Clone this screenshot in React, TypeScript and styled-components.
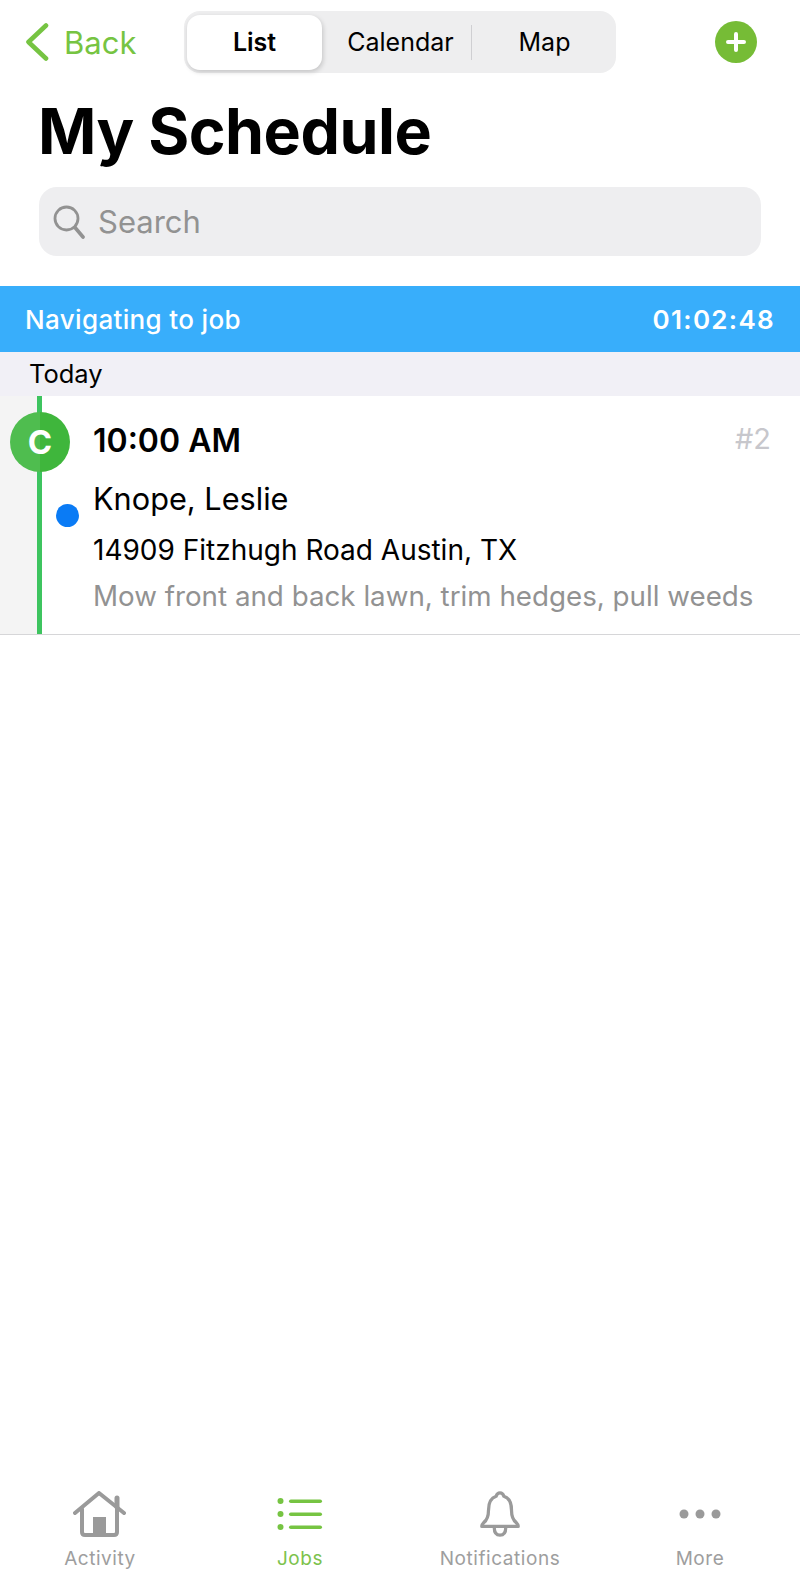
import React from 'react';
import styled, { createGlobalStyle } from 'styled-components';

const GlobalStyle = createGlobalStyle`
  html, body {
    margin: 0;
    padding: 0;
    background: #fff;
    font-family: Inter, "Liberation Sans", sans-serif;
  }
`;

const Page = styled.div`
  width: 800px;
  height: 1588px;
  display: flex;
  flex-direction: column;
  overflow: hidden;
  background: #fff;
  color: #000;
`;

const TopBar = styled.div`
  height: 62px;
  margin-top: 11px;
  padding: 0 43px 0 25px;
  display: flex;
  align-items: center;
`;

const BackLink = styled.div`
  width: 159px;
  display: flex;
  align-items: center;
  gap: 15px;
  color: #76c442;
  font-size: 31px;
`;

const Segments = styled.div`
  width: 432px;
  height: 62px;
  box-sizing: border-box;
  padding: 3px;
  border-radius: 16px;
  background: #eeeeef;
  display: grid;
  grid-template-columns: 135px 150px 1fr;
  align-items: center;
`;

const Segment = styled.div<{ $active?: boolean; $divider?: boolean; $inset?: number }>`
  height: 55px;
  box-sizing: border-box;
  padding-left: ${({ $inset }) => $inset ?? 0}px;
  display: flex;
  align-items: center;
  justify-content: center;
  font-size: 25px;
  font-weight: ${({ $active }) => ($active ? 600 : 400)};
  background: ${({ $active }) => ($active ? '#fff' : 'transparent')};
  border-radius: 13px;
  box-shadow: ${({ $active }) => ($active ? '1px 2px 5px rgba(0,0,0,0.18)' : 'none')};
  position: relative;

  &::after {
    content: '';
    display: ${({ $divider }) => ($divider ? 'block' : 'none')};
    position: absolute;
    right: 0;
    top: 10px;
    width: 1px;
    height: 35px;
    background: #cfcfd2;
  }
`;

const AddButton = styled.div`
  margin-left: auto;
  width: 42px;
  height: 42px;
  display: flex;
`;

const Title = styled.h1`
  margin: 20px 0 0 38px;
  height: 76px;
  line-height: 76px;
  font-size: 62.7px;
  font-weight: 700;
  letter-spacing: -0.5px;
`;

const SearchBox = styled.div`
  margin: 18px 39px 0;
  height: 69px;
  border-radius: 18px;
  background: #eeeef0;
  display: flex;
  align-items: center;
  gap: 13px;
  padding-left: 14px;
  color: #929292;
  font-size: 31px;
`;

const Banner = styled.div`
  margin-top: 30px;
  height: 66px;
  padding: 0 25px 0 25px;
  display: flex;
  align-items: center;
  justify-content: space-between;
  background: #38aefb;
  color: #fff;
  font-size: 26px;
  font-weight: 500;
  letter-spacing: 0.35px;
`;

const Timer = styled.span`
  font-weight: 600;
  letter-spacing: 1.3px;
`;

const DayHeader = styled.div`
  height: 44px;
  box-sizing: border-box;
  padding: 0 0 2px 29px;
  display: flex;
  align-items: center;
  background: #f1f0f6;
  font-size: 25.5px;
`;

const JobRow = styled.div`
  height: 238px;
  display: flex;
  border-bottom: 1px solid #d6d6d8;
`;

const Gutter = styled.div`
  width: 93px;
  flex-shrink: 0;
  position: relative;
  background: linear-gradient(to right, #f4f4f4 39px, #fff 39px);
`;

const TimeLine = styled.div`
  position: absolute;
  left: 37px;
  top: 0;
  bottom: 0;
  width: 5px;
  background: #3dc45f;
`;

const StatusCircle = styled.div`
  position: absolute;
  left: 10px;
  top: 16px;
  width: 60px;
  height: 60px;
  border-radius: 50%;
  background: linear-gradient(to right, #4fbd4f 50%, #3fb63c 50%);
  color: #fff;
  font-size: 33px;
  font-weight: 700;
  display: flex;
  align-items: center;
  justify-content: center;
`;

const PriorityDot = styled.div`
  position: absolute;
  left: 56px;
  top: 108px;
  width: 23px;
  height: 23px;
  border-radius: 50%;
  background: #0a7bf5;
`;

const JobBody = styled.div`
  flex: 1;
  display: flex;
  flex-direction: column;
  padding-right: 29px;
`;

const JobHead = styled.div`
  margin-top: 24px;
  height: 40px;
  display: flex;
  align-items: center;
  justify-content: space-between;
`;

const JobTime = styled.div`
  font-size: 32px;
  font-weight: 600;
`;

const JobNumber = styled.div`
  color: #c7c7cc;
  font-size: 29px;
  margin-top: -3px;
`;

const Customer = styled.div`
  margin-top: 19px;
  height: 40px;
  line-height: 40px;
  font-size: 30.7px;
`;

const Address = styled.div`
  margin-top: 13px;
  height: 36px;
  line-height: 36px;
  font-size: 28px;
`;

const Description = styled.div`
  margin-top: 10px;
  height: 36px;
  line-height: 36px;
  font-size: 27.75px;
  color: #929292;
  white-space: nowrap;
`;

const TabBar = styled.div`
  margin-top: auto;
  height: 108px;
  box-sizing: border-box;
  padding-top: 4px;
  display: grid;
  grid-template-columns: repeat(4, 200px);
`;

const TabItem = styled.div<{ $active?: boolean }>`
  display: flex;
  flex-direction: column;
  align-items: center;
  color: ${({ $active }) => ($active ? '#7cc24c' : '#9e9e9e')};
  font-size: 19px;
  font-weight: 400;
  letter-spacing: 0.55px;
`;

const TabIcon = styled.div`
  height: 63px;
  box-sizing: border-box;
  padding-bottom: 4px;
  display: flex;
  align-items: center;
  justify-content: center;
`;

const ChevronLeft = () => (
  <svg width="24" height="38" viewBox="0 0 24 38" fill="none" stroke="#76c442" strokeWidth="4.6" strokeLinecap="round" strokeLinejoin="round">
    <path d="M21 2.5 L3.5 19 L21 35.5" />
  </svg>
);

const PlusCircle = () => (
  <svg width="42" height="42" viewBox="0 0 42 42">
    <circle cx="21" cy="21" r="21" fill="#76bc36" />
    <path d="M21 13 V29 M13 21 H29" stroke="#fff" strokeWidth="4" strokeLinecap="round" />
  </svg>
);

const SearchIcon = () => (
  <svg width="32" height="34" viewBox="0 0 32 34" fill="none" stroke="#929292" strokeWidth="2.8" strokeLinecap="round">
    <circle cx="13.5" cy="13.5" r="11.5" />
    <path d="M22 22.500 L30 32" strokeWidth="3.6" />
  </svg>
);

const HouseIcon = () => (
  <svg width="54" height="46" viewBox="0 0 54 46" fill="none" stroke="#9a9a9a" strokeWidth="4" strokeLinecap="round" strokeLinejoin="round">
    <path d="M2 22 L26 2 L51 22" />
    <path d="M44 16 V7" strokeWidth="5" />
    <path d="M9 18 V41 Q9 44 12 44 H41 Q44 44 44 41 V18" />
    <rect x="20" y="26" width="13" height="18" fill="#9a9a9a" stroke="none" />
  </svg>
);

const ListIcon = () => (
  <svg width="46" height="36" viewBox="0 0 46 36" fill="#76c442">
    <circle cx="3.500" cy="5" r="3" />
    <circle cx="3.500" cy="18" r="3" />
    <circle cx="3.500" cy="31" r="3" />
    <rect x="12" y="3.500" width="33" height="3.500" rx="1.750" />
    <rect x="12" y="16.500" width="33" height="3.500" rx="1.750" />
    <rect x="12" y="29.500" width="33" height="3.500" rx="1.750" />
  </svg>
);

const BellIcon = () => (
  <svg width="44" height="46" viewBox="0 0 44 48" fill="none" stroke="#9a9a9a" strokeWidth="3.400" strokeLinecap="round" strokeLinejoin="round">
    <path d="M3 37 Q3 35 5 33 Q10 29 10 20 Q10 8 18 5.500 Q19 2 22 2 Q25 2 26 5.500 Q34 8 34 20 Q34 29 39 33 Q41 35 41 37 Z" />
    <path d="M16 38 Q16 46 22 46 Q28 46 28 38" />
  </svg>
);

const DotsIcon = () => (
  <svg width="42" height="10" viewBox="0 0 42 10" fill="#9a9a9a">
    <circle cx="5" cy="5" r="4.500" />
    <circle cx="21" cy="5" r="4.500" />
    <circle cx="37" cy="5" r="4.500" />
  </svg>
);

const tabs = [
  { label: 'Activity', icon: <HouseIcon /> },
  { label: 'Jobs', icon: <ListIcon />, active: true },
  { label: 'Notifications', icon: <BellIcon /> },
  { label: 'More', icon: <DotsIcon /> },
];

const App: React.FC = () => (
  <Page>
    <GlobalStyle />
    <TopBar>
      <BackLink>
        <ChevronLeft />
        Back
      </BackLink>
      <Segments>
        <Segment $active>List</Segment>
        <Segment $divider $inset={7}>Calendar</Segment>
        <Segment $inset={4}>Map</Segment>
      </Segments>
      <AddButton>
        <PlusCircle />
      </AddButton>
    </TopBar>

    <Title>My Schedule</Title>

    <SearchBox>
      <SearchIcon />
      Search
    </SearchBox>

    <Banner>
      <span>Navigating to job</span>
      <Timer>01:02:48</Timer>
    </Banner>

    <DayHeader>Today</DayHeader>

    <JobRow>
      <Gutter>
        <TimeLine />
        <StatusCircle>C</StatusCircle>
        <PriorityDot />
      </Gutter>
      <JobBody>
        <JobHead>
          <JobTime>10:00 AM</JobTime>
          <JobNumber>#2</JobNumber>
        </JobHead>
        <Customer>Knope, Leslie</Customer>
        <Address>14909 Fitzhugh Road Austin, TX</Address>
        <Description>Mow front and back lawn, trim hedges, pull weeds</Description>
      </JobBody>
    </JobRow>

    <TabBar>
      {tabs.map((tab) => (
        <TabItem key={tab.label} $active={tab.active}>
          <TabIcon>{tab.icon}</TabIcon>
          {tab.label}
        </TabItem>
      ))}
    </TabBar>
  </Page>
);

export default App;
